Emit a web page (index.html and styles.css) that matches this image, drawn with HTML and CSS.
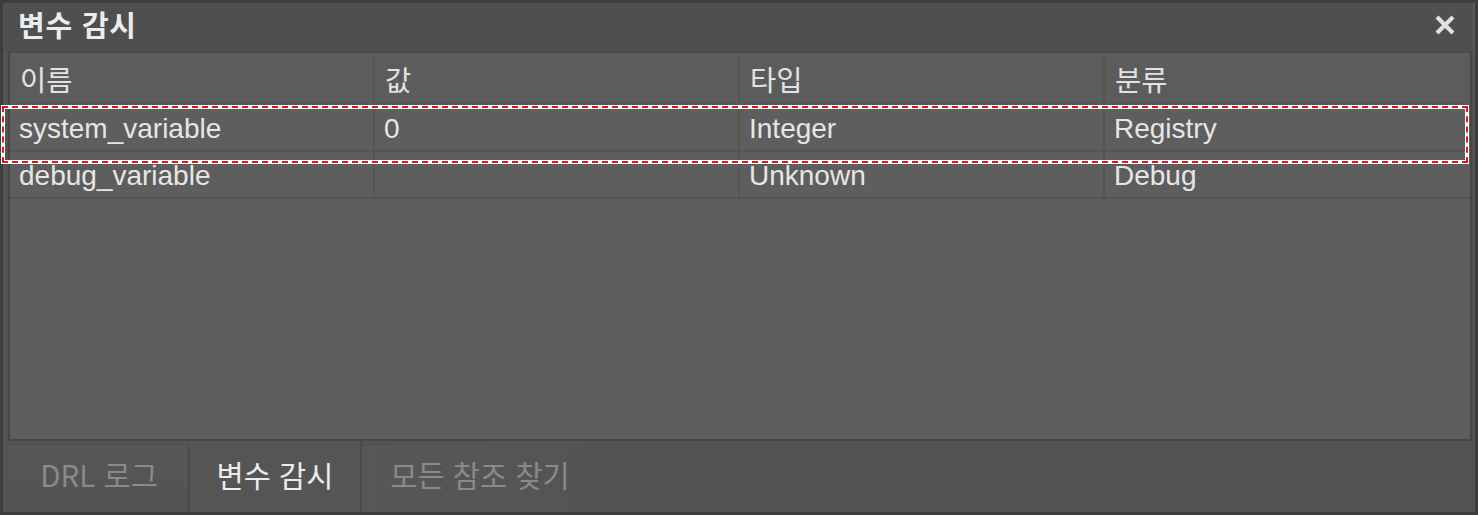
FILE: index.html
```html
<!DOCTYPE html>
<html lang="ko">
<head>
<meta charset="utf-8">
<title>변수 감시</title>
<link rel="stylesheet" href="styles.css">
</head>
<body>
<div class="window">
  <div class="titlebar">
    <span class="title">변수 감시</span>
    <svg class="close" width="22" height="20" viewBox="0 0 22 20" aria-label="닫기">
      <path d="M3 2 L19 18 M19 2 L3 18" stroke="#e2e2e2" stroke-width="4.2" stroke-linecap="butt"/>
    </svg>
  </div>
  <div class="grid">
    <div class="row head">
      <div class="cell">이름</div>
      <div class="cell">값</div>
      <div class="cell">타입</div>
      <div class="cell">분류</div>
    </div>
    <div class="row">
      <div class="cell">system_variable</div>
      <div class="cell">0</div>
      <div class="cell">Integer</div>
      <div class="cell">Registry</div>
    </div>
    <div class="row">
      <div class="cell">debug_variable</div>
      <div class="cell"></div>
      <div class="cell">Unknown</div>
      <div class="cell">Debug</div>
    </div>
  </div>
  <div class="tabs">
    <div class="tab">DRL 로그</div>
    <div class="tab active">변수 감시</div>
    <div class="tab">모든 참조 찾기</div>
  </div>
  <div class="highlight"></div>
</div>
</body>
</html>
```

FILE: styles.css
```css
html, body {
  margin: 0;
  padding: 0;
  background: #3c3c3c;
}
body {
  font-family: "Liberation Sans", "Noto Sans CJK KR", sans-serif;
  color: #e6e6e6;
}
.window {
  position: relative;
  width: 1478px;
  height: 515px;
  box-sizing: border-box;
  border: 3px solid #3d3d3d;
  background: #535353;
  display: flex;
  flex-direction: column;
}
.titlebar {
  height: 48px;
  flex: none;
  display: flex;
  align-items: center;
  justify-content: space-between;
  padding: 0 17px 0 15px;
  background: #4f4f4f;
  border-right: 2px solid #5a5a5a;
}
.title {
  font-family: "Noto Sans CJK KR", sans-serif;
  font-weight: 700;
  font-size: 29px;
  color: #ececec;
  letter-spacing: 0.8px;
  position: relative;
  top: -3px;
}
.close {
  display: block;
  margin-top: -4px;
}
.grid {
  flex: 1;
  margin: 0 3px 0 5px;
  border: 2px solid #474747;
  border-top-color: #4a4a4a;
  background: #5e5e5e;
  display: flex;
  flex-direction: column;
}
.row {
  display: grid;
  grid-template-columns: repeat(4, 1fr);
  height: 45px;
  border-bottom: 2px solid #555555;
}
.row.head {
  height: 50px;
  background: #5c5c5c;
}
.cell {
  display: flex;
  align-items: center;
  padding: 0 9px 0 9px;
  font-size: 28px;
  border-right: 2px solid #555555;
  white-space: nowrap;
  overflow: hidden;
}
.row:not(.head) .cell {
  padding-top: 2px;
}
.cell:last-child {
  border-right: none;
}
.head .cell {
  font-family: "Noto Sans CJK KR", sans-serif;
  font-size: 28.5px;
  color: #e2e2e2;
  padding-left: 10px;
}
.tabs {
  flex: none;
  height: 66px;
  margin: 5px 3px 0 5px;
  display: flex;
  align-items: stretch;
}
.tab {
  box-sizing: border-box;
  display: flex;
  align-items: center;
  justify-content: center;
  font-family: "Noto Sans CJK KR", sans-serif;
  font-size: 29.5px;
  color: #8a8a8a;
  background: linear-gradient(#575757, #525252);
  border-right: 2px solid #4a4a4a;
  padding-bottom: 11px;
}
.tab:first-child {
  width: 182px;
  padding-left: 2px;
}
.tab.active {
  width: 172px;
  color: #ececec;
  background: #555555;
  border-right: 2px solid #4a4a4a;
  margin-top: -5px;
  padding-bottom: 6px;
}
.tab:last-child {
  width: 236px;
  border-right: none;
  background: linear-gradient(90deg, #575757, #555555 60%, #545454);
}
.highlight {
  position: absolute;
  left: -2px;
  top: 102px;
  width: 1460px;
  height: 51px;
  border: 4px solid #ffffff;
  pointer-events: none;
}
.highlight::after {
  content: "";
  position: absolute;
  inset: -3px;
  border: 2px dashed #e4141b;
}
```
